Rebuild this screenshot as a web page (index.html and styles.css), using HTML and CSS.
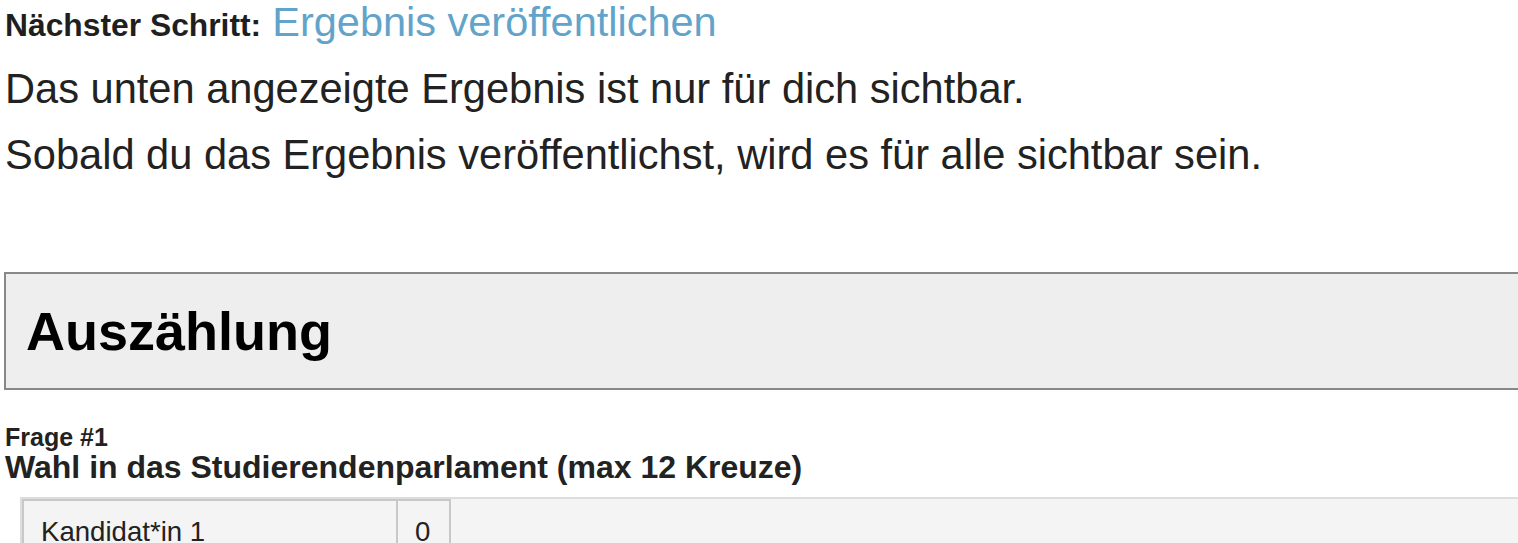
FILE: index.html
```html
<!DOCTYPE html>
<html lang="de">
<head>
<meta charset="utf-8">
<title>Ergebnis</title>
<link rel="stylesheet" href="styles.css">
</head>
<body>
<div class="page">
  <div class="next-step">
    <span class="next-label">Nächster Schritt:</span>
    <a class="next-link" href="#">Ergebnis veröffentlichen</a>
  </div>
  <p class="info">Das unten angezeigte Ergebnis ist nur für dich sichtbar.</p>
  <p class="info">Sobald du das Ergebnis veröffentlichst, wird es für alle sichtbar sein.</p>

  <div class="count-box">
    <h1 class="count-title">Auszählung</h1>
  </div>

  <div class="question">
    <div class="q-number">Frage #1</div>
    <div class="q-title">Wahl in das Studierendenparlament (max 12 Kreuze)</div>
  </div>

  <div class="results">
    <table class="result-table">
      <tr>
        <td class="cand">Kandidat*in 1</td>
        <td class="votes">0</td>
      </tr>
    </table>
  </div>
</div>
</body>
</html>
```

FILE: styles.css
```css
html, body {
  margin: 0;
  padding: 0;
  overflow: hidden;
  background: #ffffff;
}

body {
  font-family: "Liberation Sans", Arial, sans-serif;
  color: #222222;
}

.page {
  width: 1580px;
  padding: 0 0 0 4px;
}

.next-step {
  height: 56px;
  display: flex;
  align-items: baseline;
  gap: 11px;
  padding-left: 1px;
}

.next-label {
  font-weight: bold;
  font-size: 31.8px;
  line-height: 44px;
  color: #1f1f1f;
}

.next-link {
  font-size: 41.5px;
  line-height: 44px;
  color: #62a3c9;
  text-decoration: none;
}

.info {
  margin: 0;
  padding-left: 1px;
  font-size: 41.6px;
  line-height: 66px;
  color: #222222;
}

.count-box {
  margin-top: 84px;
  border: 2px solid #888888;
  background: #eeeeee;
  height: 114px;
  display: flex;
  align-items: center;
  padding-left: 20px;
}

.count-title {
  margin: 0;
  font-size: 54px;
  font-weight: bold;
  color: #000000;
}

.question {
  margin-top: 34px;
  padding-left: 1px;
}

.q-number {
  font-size: 25px;
  font-weight: bold;
  line-height: 27px;
  color: #222222;
}

.q-title {
  font-size: 32px;
  font-weight: bold;
  line-height: 32px;
  color: #222222;
}

.results {
  margin-top: 14px;
  margin-left: 16px;
  border: 2px solid #dddddd;
  background: #f4f4f4;
}

.result-table {
  border-collapse: collapse;
}

.result-table td {
  border: 2px solid #c8c8c8;
  padding: 15px 17px 12px;
  font-size: 27.6px;
  color: #222222;
}

.result-table .cand {
  width: 338px;
}

.result-table .votes {
  padding-right: 19px;
}
```
